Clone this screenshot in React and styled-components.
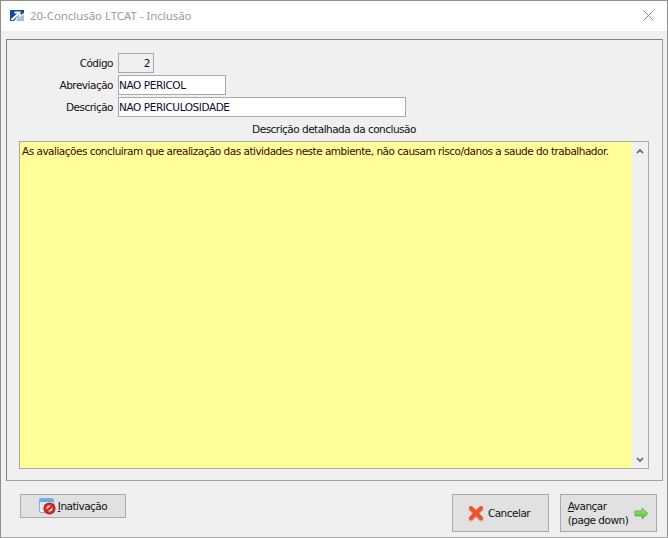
import React from "react";
import styled, { createGlobalStyle } from "styled-components";

const Global = createGlobalStyle`
  html, body {
    margin: 0;
    padding: 0;
    background: #f0f0f0;
  }
  * {
    box-sizing: border-box;
  }
`;

const Win = styled.div`
  width: 668px;
  height: 538px;
  display: flex;
  flex-direction: column;
  background: #f0f0f0;
  border: 1px solid #8f8f8f;
  border-bottom: 1px solid #a8a8a8;
  font-family: "DejaVu Sans", sans-serif;
  font-size: 10.5px;
  letter-spacing: -0.51px;
  color: #111;
  overflow: hidden;
`;

const TitleBar = styled.div`
  height: 30px;
  flex: none;
  background: #fff;
  display: flex;
  align-items: center;
  padding: 0 13px 1px 9px;
  gap: 5px;
`;

const Title = styled.span`
  flex: 1;
  font-family: "Noto Sans", sans-serif;
  font-size: 11.4px;
  letter-spacing: 0;
  color: #9a9a9a;
`;

const Panel = styled.div`
  flex: none;
  height: 442px;
  margin: 8px 4px 0 5px;
  border: 1px solid #a0a0a0;
  border-top-color: #808080;
  border-left-color: #808080;
  padding: 13px 13px 11px 12px;
  display: flex;
  flex-direction: column;
`;

const Row = styled.div`
  display: flex;
  align-items: center;
  height: 20px;
  margin-bottom: 2px;
`;

const Label = styled.label`
  width: 94px;
  margin-right: 5px;
  text-align: right;
`;

const Field = styled.div`
  width: ${(p) => p.$width}px;
  height: 20px;
  border: 1px solid #a9a9a9;
  background: ${(p) => (p.$readOnly ? "#f0f0f0" : "#fff")};
  text-align: ${(p) => (p.$readOnly ? "right" : "left")};
  padding: 0;
  line-height: 18px;
  letter-spacing: -0.42px;
  color: #0a0a30;
`;

const Caption = styled.div`
  text-align: center;
  margin: 3px 0 4px;
  line-height: 15px;
  height: 15px;
`;

const Memo = styled.div`
  flex: 1;
  display: flex;
  border: 1px solid #a9a9a9;
  background: #ffff99;
`;

const MemoText = styled.div`
  flex: 1;
  padding: 2px 2px;
  line-height: 15px;
  color: #3a0808;
`;

const Scrollbar = styled.div`
  width: 16px;
  background: #f0f0f0;
  display: flex;
  flex-direction: column;
  justify-content: space-between;
  align-items: center;
  padding: 6px 0 5px;
`;

const Footer = styled.div`
  flex: 1;
  display: flex;
  align-items: flex-start;
  padding: 13px 10px 0 19px;
`;

const Button = styled.button`
  width: ${(p) => p.$width}px;
  height: ${(p) => p.$height}px;
  margin-left: ${(p) => p.$gap || 0}px;
  border: 1px solid #a9a9a9;
  background: #e1e1e1;
  font: inherit;
  letter-spacing: inherit;
  color: #111;
  display: flex;
  align-items: center;
  justify-content: center;
  gap: ${(p) => p.$iconGap || 3}px;
  padding: 0 ${(p) => p.$padRight || 0}px 0 0;
  text-align: left;
  line-height: 14px;
`;

const Spacer = styled.div`
  flex: 1;
`;

const Shortcut = styled.span`
  text-decoration: underline;
`;

const AppIcon = () => (
  <svg width="15" height="11" viewBox="0 0 15 11">
    <path d="M0 0 H14 V3 L9 6 L7 7 L4 11 H0 Z" fill="#0f4d9c" />
    <path d="M8 7 L10 4 L12 6 L14 4 V11 H6 Z" fill="#a9bfd6" />
    <path d="M1.5 10 L8 4 M4.5 2.5 H9.5 V7" stroke="#fff" strokeWidth="2" fill="none" />
  </svg>
);

const CloseIcon = () => (
  <svg width="11" height="11" viewBox="0 0 11 11">
    <path d="M0.5 0.5 L10.5 10.5 M10.5 0.5 L0.5 10.5" stroke="#8a8a8a" strokeWidth="1" />
  </svg>
);

const Chevron = ({ up }) => (
  <svg width="8" height="6" viewBox="0 0 8 6">
    <path d={up ? "M1 5 L4 2 L7 5" : "M1 1 L4 4 L7 1"} stroke="#606060" strokeWidth="1.7" fill="none" />
  </svg>
);

const InactiveIcon = () => (
  <svg width="17" height="17" viewBox="0 0 17 17">
    <rect x="0.5" y="0.5" width="14" height="14" rx="1.5" fill="#e4eefa" stroke="#7fb2e0" />
    <rect x="1" y="1" width="13" height="3" fill="#6aaae6" />
    <path d="M3 7 H9 M3 10 H6" stroke="#a8c6e2" />
    <circle cx="10.5" cy="10.5" r="6" fill="#a81818" />
    <circle cx="10.5" cy="10.5" r="5" fill="#e02a2a" />
    <circle cx="10.5" cy="10.5" r="3" fill="#f3d8d8" />
    <path d="M7.5 13 L13.5 8" stroke="#d82020" strokeWidth="2.2" />
  </svg>
);

const CancelIcon = () => (
  <svg width="16" height="17" viewBox="0 0 16 17">
    <path d="M3 4 L13 14 M13 4 L3 14" stroke="#b9a8a2" strokeWidth="4.6" strokeLinecap="round" />
    <path d="M3 3 L13 13 M13 3 L3 13" stroke="#f4512b" strokeWidth="4" strokeLinecap="round" />
  </svg>
);

const ArrowIcon = () => (
  <svg width="15" height="13" viewBox="0 0 15 13">
    <defs>
      <linearGradient id="arrowFill" x1="0" y1="0" x2="0" y2="1">
        <stop offset="0" stopColor="#a4ec6e" />
        <stop offset="1" stopColor="#3fc51f" />
      </linearGradient>
    </defs>
    <path d="M1 4 H8 V1 L14 6.5 L8 12 V9 H1 Z" fill="url(#arrowFill)" stroke="#6a9f5a" strokeWidth="0.8" />
  </svg>
);

export default function App() {
  return (
    <Win>
      <Global />
      <TitleBar>
        <AppIcon />
        <Title>20-Conclusão LTCAT - Inclusão</Title>
        <CloseIcon />
      </TitleBar>
      <Panel>
        <Row>
          <Label>Código</Label>
          <Field $width={36} $readOnly>2&nbsp;</Field>
        </Row>
        <Row>
          <Label>Abreviação</Label>
          <Field $width={108}>NAO PERICOL</Field>
        </Row>
        <Row>
          <Label>Descrição</Label>
          <Field $width={288}>NAO PERICULOSIDADE</Field>
        </Row>
        <Caption>Descrição detalhada da conclusão</Caption>
        <Memo>
          <MemoText>
            As avaliações concluiram que arealização das atividades neste ambiente, não causam risco/danos a saude do trabalhador.
          </MemoText>
          <Scrollbar>
            <Chevron up />
            <Chevron />
          </Scrollbar>
        </Memo>
      </Panel>
      <Footer>
        <Button $width={106} $height={24} $iconGap={2}>
          <InactiveIcon />
          <span><Shortcut>I</Shortcut>nativação</span>
        </Button>
        <Spacer />
        <Button $width={97} $height={38} $iconGap={4} $padRight={3}>
          <CancelIcon />
          Cancelar
        </Button>
        <Button $width={97} $height={38} $gap={11} $iconGap={6}>
          <span><Shortcut>A</Shortcut>vançar<br />(page down)</span>
          <ArrowIcon />
        </Button>
      </Footer>
    </Win>
  );
}
